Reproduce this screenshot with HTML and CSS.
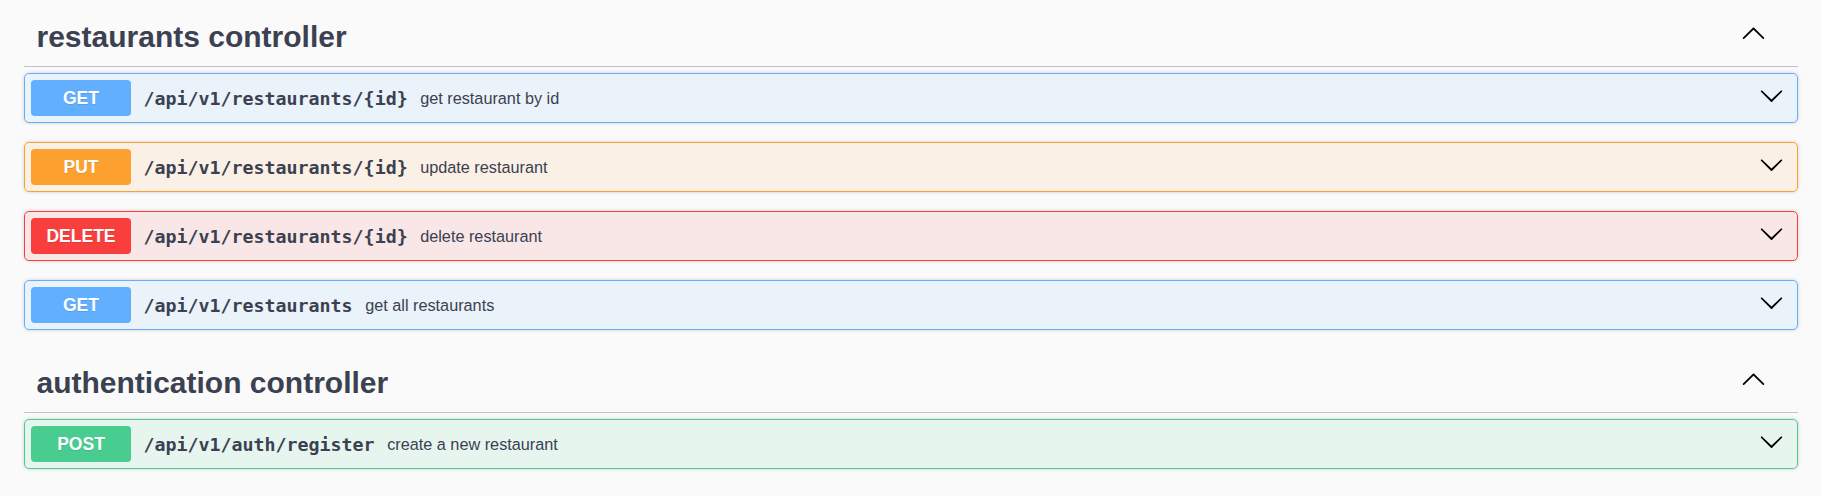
FILE: index.html
```html
<!DOCTYPE html>
<html lang="en">
<head>
<meta charset="utf-8">
<title>Swagger UI</title>
<link rel="stylesheet" href="styles.css">
</head>
<body>
<svg class="defs" width="0" height="0" aria-hidden="true">
  <symbol viewBox="0 0 20 20" id="arrow-down"><path d="M17.418 6.109c.272-.268.709-.268.979 0s.271.701 0 .969l-7.908 7.83c-.27.268-.707.268-.979 0l-7.908-7.830c-.27-.268-.27-.701 0-.969.271-.268.709-.268.979 0L10 13.25l7.418-7.141z"/></symbol>
  <symbol viewBox="0 0 20 20" id="arrow-up"><path d="M17.418 14.908c.272.268.709.268.979 0s.271-.701 0-.969l-7.908-7.83c-.27-.268-.707-.268-.979 0l-7.908 7.83c-.27.268-.27.701 0 .969.271.268.709.268.979 0L10 7.75l7.418 7.158z"/></symbol>
</svg>
<div class="wrapper">
  <section class="tag-section">
    <div class="tag">
      <span class="tag-name">restaurants controller</span>
      <svg class="tag-arrow" width="25" height="25"><use href="#arrow-up"/></svg>
    </div>
    <div class="op op-get">
      <span class="method">GET</span>
      <span class="path">/api/v1/restaurants/{id}</span>
      <span class="desc">get restaurant by id</span>
      <svg class="op-arrow" width="25" height="25"><use href="#arrow-down"/></svg>
    </div>
    <div class="op op-put">
      <span class="method">PUT</span>
      <span class="path">/api/v1/restaurants/{id}</span>
      <span class="desc">update restaurant</span>
      <svg class="op-arrow" width="25" height="25"><use href="#arrow-down"/></svg>
    </div>
    <div class="op op-delete">
      <span class="method">DELETE</span>
      <span class="path">/api/v1/restaurants/{id}</span>
      <span class="desc">delete restaurant</span>
      <svg class="op-arrow" width="25" height="25"><use href="#arrow-down"/></svg>
    </div>
    <div class="op op-get">
      <span class="method">GET</span>
      <span class="path">/api/v1/restaurants</span>
      <span class="desc">get all restaurants</span>
      <svg class="op-arrow" width="25" height="25"><use href="#arrow-down"/></svg>
    </div>
  </section>
  <section class="tag-section">
    <div class="tag">
      <span class="tag-name">authentication controller</span>
      <svg class="tag-arrow" width="25" height="25"><use href="#arrow-up"/></svg>
    </div>
    <div class="op op-post">
      <span class="method">POST</span>
      <span class="path">/api/v1/auth/register</span>
      <span class="desc">create a new restaurant</span>
      <svg class="op-arrow" width="25" height="25"><use href="#arrow-down"/></svg>
    </div>
  </section>
</div>
</body>
</html>
```

FILE: styles.css
```css
html, body {
  margin: 0;
  padding: 0;
  background: #fafafa;
}

.defs {
  position: absolute;
  width: 0;
  height: 0;
  overflow: hidden;
}

.wrapper {
  padding: 7px 23px 0 24px;
  font-family: "Liberation Sans", Arial, sans-serif;
  color: #3b4151;
}

.tag-section + .tag-section {
  margin-top: 23px;
}

.tag {
  display: flex;
  align-items: center;
  box-sizing: border-box;
  height: 60px;
  padding: 0 32px 0 12.5px;
  border-bottom: 1px solid rgba(59, 65, 81, 0.3);
  margin-bottom: 6px;
}

.tag-name {
  flex: 1;
  font-size: 30px;
  font-weight: 700;
  color: #3b4151;
}

.tag-arrow {
  fill: #000;
  margin-bottom: 9px;
  flex: none;
}

.op {
  display: flex;
  align-items: center;
  box-sizing: border-box;
  height: 50px;
  padding: 6px;
  border: 1px solid;
  border-radius: 5px;
  margin-bottom: 19px;
  box-shadow: 0 0 3.75px rgba(0, 0, 0, 0.19);
}

.method {
  flex: none;
  width: 100px;
  height: 36px;
  line-height: 36px;
  text-align: center;
  border-radius: 3.75px;
  color: #fff;
  font-size: 17.5px;
  font-weight: 700;
  text-shadow: 0 1px 0 rgba(0, 0, 0, 0.1);
}

.path {
  padding: 0 12.5px;
  font-family: "DejaVu Sans Mono", "Liberation Mono", monospace;
  font-size: 18.3px;
  font-weight: 700;
  color: #3b4151;
}

.desc {
  flex: 1;
  font-size: 16.25px;
  color: #3b4151;
}

.op-arrow {
  flex: none;
  fill: #000;
  margin: 0 7px 5px 0;
}

.op-get { background: rgba(97, 175, 254, 0.1); border-color: #61affe; }
.op-get .method { background: #61affe; }

.op-put { background: rgba(252, 161, 48, 0.1); border-color: #fca130; }
.op-put .method { background: #fca130; }

.op-delete { background: rgba(249, 62, 62, 0.1); border-color: #f93e3e; }
.op-delete .method { background: #f93e3e; }

.op-post { background: rgba(73, 204, 144, 0.1); border-color: #49cc90; }
.op-post .method { background: #49cc90; }
```
